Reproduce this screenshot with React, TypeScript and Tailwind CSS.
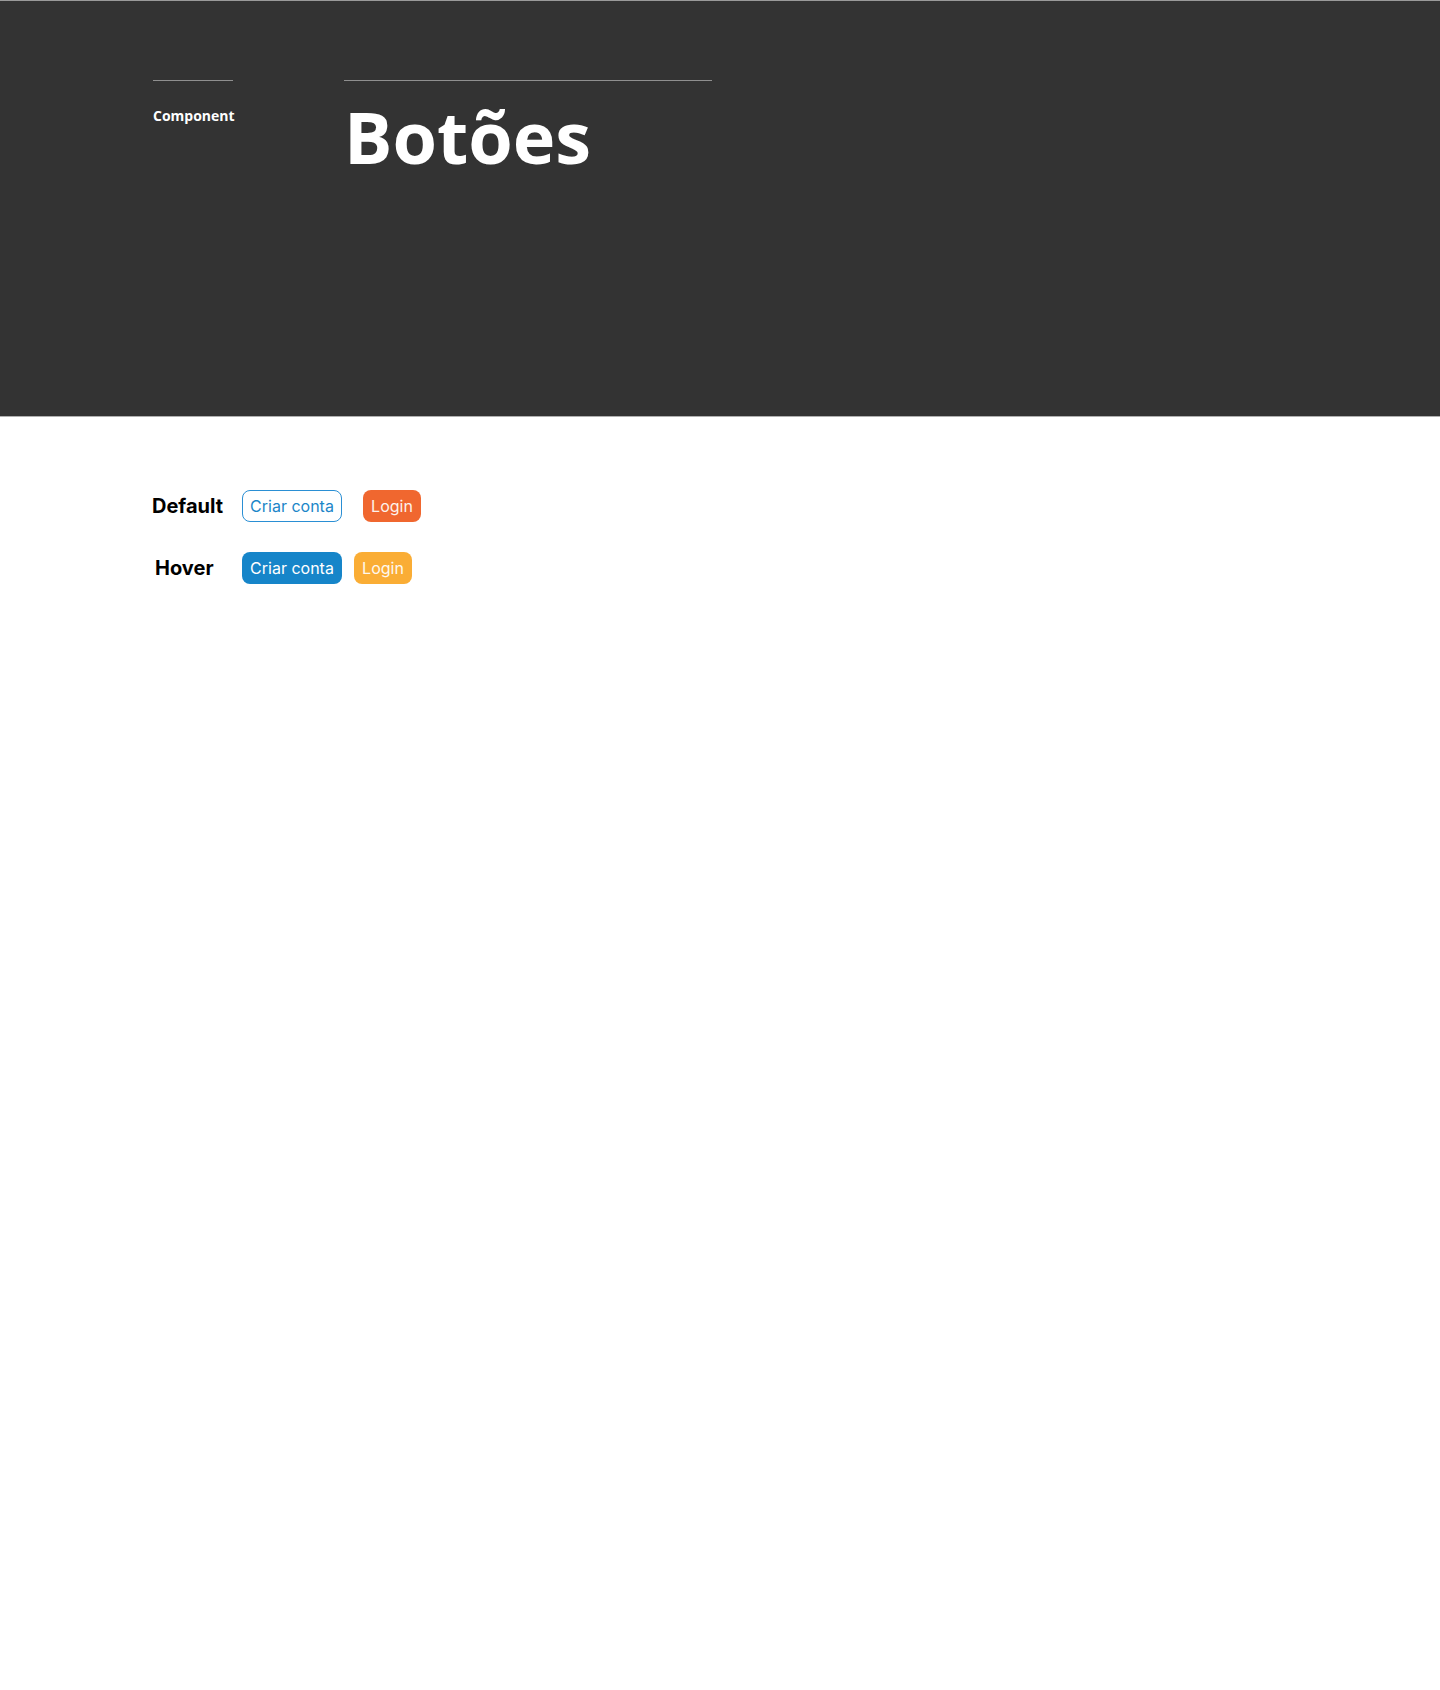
import React from "react";

export default function App() {
  return (
    <div className="min-h-[1690px] w-full bg-white">
      <header className="h-[417px] w-full border-t border-b border-t-[#9a9a9a] border-b-[#b0b0b0] bg-[#333333] pl-[153px] pt-[79px]">
        <div className="flex gap-[111px]">
          <div className="w-[80px] border-t border-[#8f8f8f]">
            <p
              className="mt-[25px] text-[14px] font-bold leading-[20px] text-white"
              style={{ fontFamily: '"Open Sans", sans-serif' }}
            >
              Component
            </p>
          </div>
          <div className="w-[368px] border-t border-[#8f8f8f]">
            <h1
              className="mt-[19px] text-[72px] font-bold leading-none text-white"
              style={{ fontFamily: '"Open Sans", sans-serif' }}
            >
              Botões
            </h1>
          </div>
        </div>
      </header>

      <main
        className="pl-[152px] pt-[73px]"
        style={{ fontFamily: 'Inter, "Noto Sans", sans-serif' }}
      >
        <div className="flex flex-col gap-[30px]">
          <div className="flex h-[32px] items-center">
            <span className="w-[90px] text-[20px] font-bold leading-[28px] text-black">
              Default
            </span>
            <button className="flex h-[32px] w-[100px] items-center justify-center rounded-lg border border-[#2a8fd4] bg-white text-[16px] leading-[24px] text-[#1c86c8]">
              Criar conta
            </button>
            <button className="ml-[21px] flex h-[32px] w-[58px] items-center justify-center rounded-lg bg-[#f0672f] text-[16px] leading-[24px] text-[#fdf2ec]">
              Login
            </button>
          </div>
          <div className="flex h-[32px] items-center">
            <span className="w-[90px] pl-[3px] text-[20px] font-bold leading-[28px] text-black">
              Hover
            </span>
            <button className="flex h-[32px] w-[100px] items-center justify-center rounded-lg bg-[#1685c9] text-[16px] leading-[24px] text-white">
              Criar conta
            </button>
            <button className="ml-[12px] flex h-[32px] w-[58px] items-center justify-center rounded-lg bg-[#faad35] text-[16px] leading-[24px] text-[#fff8ee]">
              Login
            </button>
          </div>
        </div>
      </main>
    </div>
  );
}
